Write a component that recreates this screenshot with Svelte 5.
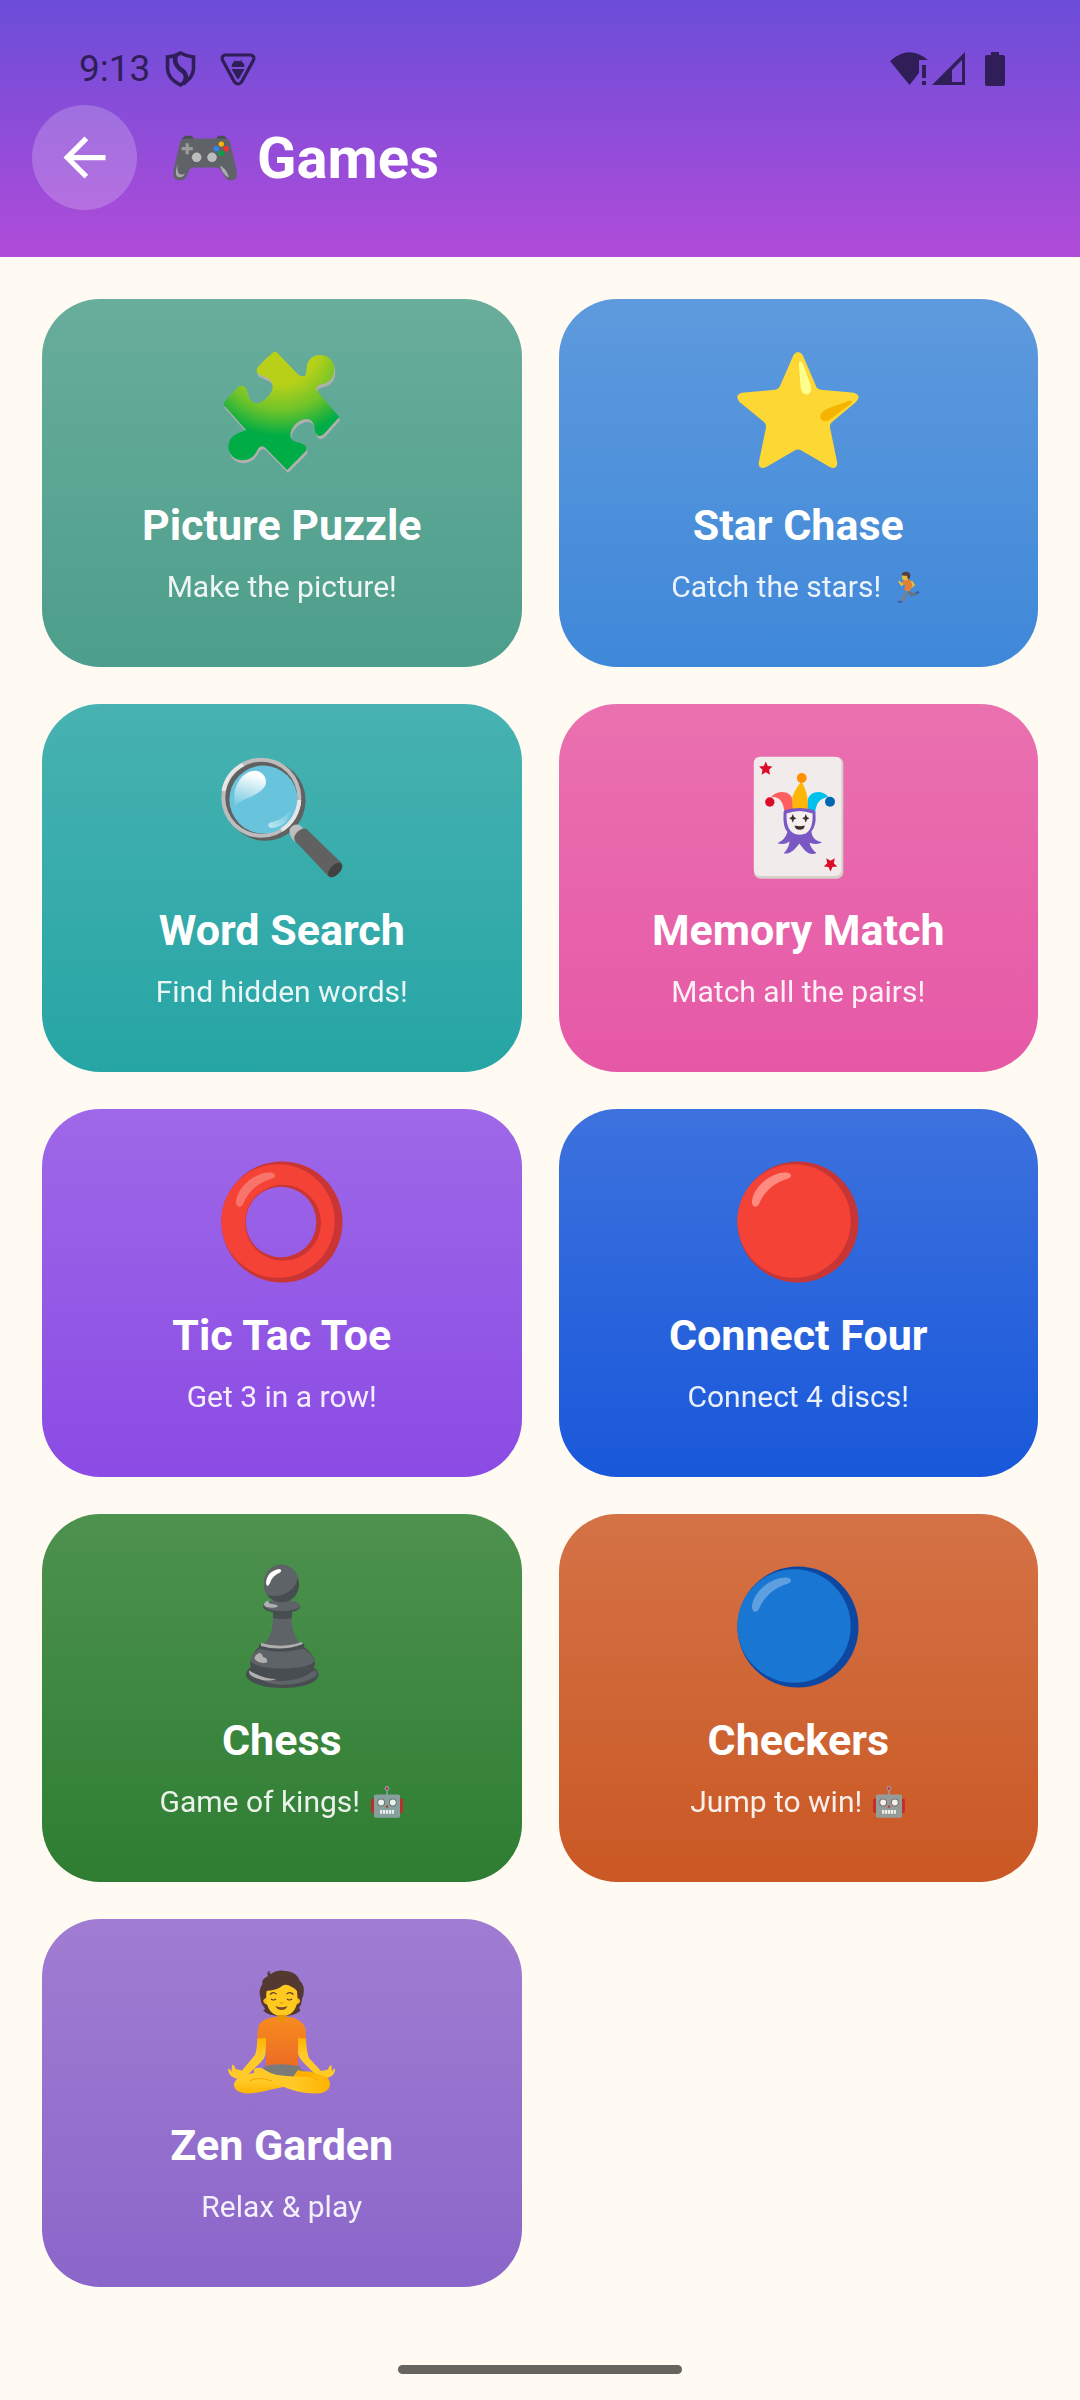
<script lang="ts">
  type Game = {
    id: string;
    title: string;
    tagline: string;
    badge?: 'runner' | 'robot';
    top: string;
    bottom: string;
  };

  const games: Game[] = [
    { id: 'puzzle', title: 'Picture Puzzle', tagline: 'Make the picture!', top: '#69ad9b', bottom: '#4d9e8c' },
    { id: 'star', title: 'Star Chase', tagline: 'Catch the stars!', badge: 'runner', top: '#5e9add', bottom: '#3f88d9' },
    { id: 'search', title: 'Word Search', tagline: 'Find hidden words!', top: '#47b2b1', bottom: '#26a5a5' },
    { id: 'memory', title: 'Memory Match', tagline: 'Match all the pairs!', top: '#ea71b0', bottom: '#e658a6' },
    { id: 'ring', title: 'Tic Tac Toe', tagline: 'Get 3 in a row!', top: '#9e68e8', bottom: '#8b4be4' },
    { id: 'red', title: 'Connect Four', tagline: 'Connect 4 discs!', top: '#3d72de', bottom: '#1958da' },
    { id: 'chess', title: 'Chess', tagline: 'Game of kings!', badge: 'robot', top: '#4d924f', bottom: '#2e7d32' },
    { id: 'blue', title: 'Checkers', tagline: 'Jump to win!', badge: 'robot', top: '#d47246', bottom: '#ca5824' },
    { id: 'zen', title: 'Zen Garden', tagline: 'Relax & play', top: '#a07dd2', bottom: '#8b66ca' }
  ];
</script>

{#snippet disc(base: string, shade: string, shine: string)}
  <circle cx="64" cy="64" r="60.5" fill={shade} />
  <circle cx="60" cy="63" r="56.7" fill={base} />
  <path d="M52 14.6C38 14 20 28 18 43c-.6 6 4.600 7.600 7 3C30 34 40 24.500 53 21c6-1.600 5-6.200-1-6.400z" fill={shine} />
{/snippet}

{#snippet gameIcon(id: string)}
  <svg class="game-icon" viewBox="0 0 128 128" aria-hidden="true">
    {#if id === 'puzzle'}
      <defs>
        <radialGradient id="piece-fill" gradientUnits="userSpaceOnUse" cx="62" cy="-2" r="90">
          <stop offset=".42" stop-color="#b8d118" />
          <stop offset=".72" stop-color="#6fc32a" />
          <stop offset="1" stop-color="#00ac46" />
        </radialGradient>
        <path
          id="piece"
          d="M55 4.500Q57 2.500 59 4.500L80 26.500Q83 29 86.500 28Q88.500 27 88.600 20C89.500 3 114 3 116.200 19C117 29 112 35 104 36.200Q96 38 99.500 43.500L121.300 69L106 86Q100 91 97.200 84C96.500 76 95 71.500 88 71C80 71.500 72 80 72.400 88C74 97 84 92 88 99Q89 101.500 87.500 103.500L69 122L48 100.500Q43 95.500 39.500 102Q35 111 27 112C16 113.500 8 104 11 95C13 86 22 85 28 82L5.300 56.500Q6 53 20 39Q25.500 35.500 28.700 41.500C30 50 34 56 40 55.200C47 53 55 45 54.700 38C54 28 42 29 39 24.500Q38 22 40 19Q46 12 55 4.500Z"
        />
      </defs>
      <use href="#piece" x="1" y="3" fill="#b0b0ae" />
      <use href="#piece" fill="url(#piece-fill)" />
    {:else if id === 'star'}
      <path d="M59.500 7Q64 1 68.700 7L82 38Q83 41.400 87 41.700L120 44.800Q128 48 122 54L97.500 74.500Q95.500 76.500 96 79.500L103.300 115Q103 122 95.800 119L66.500 102Q64 100.800 61.500 102L32.300 119Q24.500 122 24.700 115L32 79.500Q32.300 76.500 30.500 74.500L5.500 54Q0 47 8 44.800L41 41.700Q44.500 41.400 46 38Z" fill="#fdd835" />
      <path d="M65 17Q65 10 69 16L76.600 37C78 43 76 46.500 72.500 46.500C69 46.500 67 43 66.500 38Z" fill="#ffff8d" />
      <path d="M116 52.600C119.500 52.500 117.500 55.500 116 56.500L96 71.500C91 75 86 73 86.300 68C87 63 93 61 99 58.500Z" fill="#f4b400" />
    {:else if id === 'search'}
      <defs>
        <linearGradient id="lens-shine" x1=".55" y1="0" x2=".3" y2="1">
          <stop offset=".08" stop-color="#fff" />
          <stop offset="1" stop-color="#fff" stop-opacity=".1" />
        </linearGradient>
        <linearGradient id="lens-glint" x1="0" y1="1" x2="1" y2="0">
          <stop offset="0" stop-color="#c0e9f2" />
          <stop offset="1" stop-color="#68c4dd" />
        </linearGradient>
      </defs>
      <circle cx="47.300" cy="47.500" r="40.300" fill="#616161" />
      <circle cx="43.300" cy="44.700" r="40" fill="#bdbdbd" />
      <circle cx="43.300" cy="44.700" r="36" fill="#616161" />
      <circle cx="45.400" cy="46.600" r="34" fill="#68c4dd" />
      <path d="M5.500 38A38 38 0 0 1 25 11.500M81.300 47A38 38 0 0 1 63.500 77" fill="none" stroke="#e6e6e6" stroke-width="4" />
      <path d="M17 54C13 34 24 18 37 17.700C46 18 51 28 46 34.500C38 45 22 45 17 54Z" fill="url(#lens-shine)" />
      <path d="M73 56C65 67 58 68 52 69.500C49 71 50 75 54 75C66 74 72 66 73 56Z" fill="url(#lens-glint)" />
      <path d="M71.500 76Q77 69 83 73L88 80L77 89Q71 84 71.500 76Z" fill="#bdbdbd" />
      <path d="M76.300 84Q79 77 86 75.600Q88 75.600 89 76.600L123.500 110L110.500 123.500L77 88Q76 86 76.300 84Z" fill="#616161" />
      <ellipse cx="117.200" cy="117" rx="9" ry="4.800" transform="rotate(-45 117.200 117)" fill="#424242" />
    {:else if id === 'memory'}
      <rect x="20" y="4" width="89.300" height="121.700" rx="6.500" fill="#d8cfca" />
      <rect x="19.800" y="3.700" width="87.500" height="119.300" rx="6" fill="#f1eceb" />
      <path id="card-star" d="M31.800 8.500l2 4.500 4.700.5-3.400 3.300.9 4.900-4.200-2.400-4.300 2.400 1-4.900-3.500-3.300 4.800-.5z" fill="#dc0d28" />
      <use href="#card-star" transform="rotate(180 64.150 63.500)" />
      <path d="M37 44C44 36 58 38 58.700 48L59 57L50.500 60C50 50 46 43 37 44Z" fill="#ff5f5f" />
      <path d="M94.500 44C88 36 75 38 73.500 48L73 57L81.200 60C82 49 87 45 94.500 44Z" fill="#00c1ee" />
      <path d="M67.400 28C63 34 57 43 58.300 49L58.800 58H73.300C74.500 48 74 40 67.400 28Z" fill="#ffb60a" />
      <circle cx="67.800" cy="25" r="4.900" fill="#ff9100" />
      <circle cx="35.800" cy="49" r="4.700" fill="#dc0d28" />
      <circle cx="96" cy="48.700" r="5" fill="#0067b2" />
      <path d="M49.600 60Q49 57 53 56.500Q65 53.500 78.500 56.500Q82 57.500 81.500 61Q82.500 73 77.400 78.500C78 84 81 88 88 89.200Q84 92.500 75.500 89.800Q77 96 82.500 100Q76 103 70.500 97L65.300 90.500C61 96 57 101.500 49.500 100.500Q55 95 55.500 88.500Q50 92.500 43.300 90.300Q51 87 53.400 79Q48.500 74 49.600 60Z" fill="#7a58c3" />
      <path d="M52.600 60.500Q65 55.500 78.600 60.500C79 73 76 81.700 65.800 81.700C55 81.700 52 72 52.600 60.500Z" fill="#f4efee" />
      <path d="M58.800 61l1.200 3 2.500 1.200-2.500 1.300-1.200 3.200-1.200-3.200-2.500-1.300 2.500-1.200zM71.800 61l1.200 3 2.500 1.200-2.500 1.300-1.200 3.200-1.200-3.200-2.500-1.300 2.500-1.200zM60.600 72.500Q65.800 74 70.800 72.500Q70.500 76.700 65.800 76.700Q61 76.700 60.600 72.500Z" fill="#432c2c" />
    {:else if id === 'ring'}
      <mask id="ring-hole">
        <rect width="128" height="128" fill="#fff" />
        <circle cx="63" cy="64" r="35.300" fill="#000" />
      </mask>
      <g mask="url(#ring-hole)">
        {@render disc('#f44336', '#c93535', '#f8746a')}
        <circle cx="65" cy="64.800" r="38" fill="#c93535" />
      </g>
    {:else if id === 'red'}
      {@render disc('#f44336', '#c93535', '#ff8a80')}
    {:else if id === 'blue'}
      {@render disc('#1976d2', '#0d47a1', '#5e9fe0')}
    {:else if id === 'chess'}
      <path d="M28 112Q28 107 33 104H95Q100.500 107 100.500 112C99 121 82 125 64 125S29 120 28 112Z" fill="#474d50" />
      <path d="M31 108Q48 118 64 118Q82 118 97 107Q101 111 97 114Q82 122 64 122Q42 121 31 108Z" fill="#5e6367" />
      <path d="M31 107.500Q30 113 41 116Q50 119 58.500 116Q46 116 31 107.500Z" fill="#b0b0b0" />
      <path d="M41 84H86C93 89 97 95 97 101C95 110 80 114 64 114S34 111 32 101C33 94 36 88 41 84Z" fill="#474d50" />
      <path d="M41 86H86C92 90 96 94 96.500 98C94 103 80 105.500 64 105.500S37 103 32.500 98C33 94 36 89 41 86Z" fill="#5e6367" />
      <path d="M41 90Q44 90 45 94Q50 95 49 99.500Q42 101 38 97.500Q34 94 41 90Z" fill="#b0b0b0" />
      <path d="M41.300 81Q64 87 85.500 80Q87 82 85.500 85Q64 92 42 86Q40.500 84 41.300 81Z" fill="#474d50" />
      <path d="M55 52H73.500C73.500 67 77 74 82.500 81Q64 86 46 81C52 74 55.500 67 55 52Z" fill="#5e6367" />
      <path d="M43 80Q64 86 83.500 79L85 81Q64 89 43 83Z" fill="#b0b0b0" />
      <path d="M55 46H74V55Q64 57 55 55Z" fill="#474d50" />
      <ellipse cx="63.700" cy="43.500" rx="18.500" ry="6.800" fill="#474d50" />
      <ellipse cx="64" cy="42.500" rx="18" ry="5.600" fill="#5e6367" />
      <path d="M48 38.500Q43.500 42 49 44.300Q56 45.500 60 43.500Q59 41 53.500 41Q50 40 50.500 37.500Z" fill="#b0b0b0" />
      <circle cx="63.500" cy="21.700" r="17.600" fill="#474d50" />
      <path d="M46 22A17.500 17.500 0 0 1 80 14C78 27 65 36 49 32A17 17 0 0 1 46 22Z" fill="#5e6367" />
      <path d="M61 6Q65 7 62 9.500Q54 13 52 20Q49 26 48 20Q49 8 61 6Z" fill="#fff" />
    {:else}
      <defs>
        <linearGradient id="shirt" x1="0" y1="0" x2="0" y2="1">
          <stop offset="0" stop-color="#f78c1f" />
          <stop offset="1" stop-color="#ed6c23" />
        </linearGradient>
        <linearGradient id="skin" x1="0" y1="0" x2="0" y2="1">
          <stop offset="0" stop-color="#ffb300" />
          <stop offset=".4" stop-color="#ffca28" />
          <stop offset="1" stop-color="#ffca28" />
        </linearGradient>
        <linearGradient id="leg-left" x1="0" y1="0" x2="0" y2="1">
          <stop offset=".4" stop-color="#ffca28" />
          <stop offset="1" stop-color="#ffb300" />
        </linearGradient>
        <linearGradient id="leg-right" x1="0" y1="0" x2="1" y2="0">
          <stop offset=".5" stop-color="#ffca28" />
          <stop offset="1" stop-color="#ffb300" />
        </linearGradient>
      </defs>
      <path d="M50 8Q48 4 52 3Q51 6 53 6Q59 1 68 3Q79 4 82 13Q87 17 85.500 27L84 31Q84 36 81 40Q83 42 81.500 43.500Q76 48 64 48Q50 48 45 42.500Q48 42 46 39Q42.500 35 42.500 30Q40 22 44.500 16Q43 11 50 8Z" fill="#543930" />
      <ellipse cx="63.700" cy="33" rx="18.500" ry="6" fill="#f6b51c" />
      <path d="M48.500 23Q60 22 64 18Q68 15.500 73 18.500Q77 20 79 23Q82 47 64 48.500Q46 47 48.500 23Z" fill="#ffc91f" />
      <path d="M52 26.500Q55 23 58.500 26M68.500 26Q72 23 75.500 26.500M53 31Q55.500 33 58 31M69 31Q71.500 33 74 31" fill="none" stroke="#543930" stroke-width="1.200" />
      <path d="M61 34.500Q63.600 37 66 34.500Z" fill="#e59600" />
      <path d="M57.500 38Q63.500 40.500 69.500 38Q68 42 63.500 42T57.500 38Z" fill="#7d4a2d" />
      <path d="M39.300 70L48.200 70L47.500 86Q47 90 43 94L29.500 107Q26 112 20 111C12 109 10 105 10.200 101Q12 100 13.500 104L14 97Q16 96 17.500 101L24 102.500L37 87Q39 82 39.300 70Z" fill="url(#skin)" />
      <path d="M88 70L79.500 70L80 86Q81 90 85 94L98 107Q102 112 107 110.500C115 109 117 105 117 101Q115 100 114 104L113.500 97.500Q112 96.500 110 101.500L103 103L91 90Q88.500 84 88 70Z" fill="url(#skin)" />
      <path d="M47 98Q64 94 81 98Q83 102 87 104L80 112H48L43 103Z" fill="#7a7a78" />
      <path d="M63.700 48.500Q82 48 87.500 60L88 70.500L80 70V98Q64 95 48 97.500V70L39.300 70.500Q39 64 41 57Q46 48.500 63.700 48.500Z" fill="url(#shirt)" />
      <path d="M59.500 47H68V51.500Q64 54.500 59.500 51.500Z" fill="#e59600" />
      <path d="M75 109L80 102Q84 104 92 103.500L108 109Q112 112 112 117Q90 118 75 109Z" fill="#ffb300" />
      <path d="M16 116C18 108 29 106 36 105Q58 106 84 112L69 118.500C52 121 42 125.500 28 125.500Q15 124 16 116Z" fill="url(#leg-left)" />
      <path d="M36 101Q42 98 47 102Q53 106 59 107Q83 110 92 108Q105 106 111 112C114 120 109 125.500 98 125.500C83 125.500 67 121 54 113Q44 107 36 105Z" fill="url(#leg-right)" />
      <path d="M32 113Q39 108 54 113M80 107Q94 107 100 112" fill="none" stroke="#f5a800" stroke-width="1.200" />
    {/if}
  </svg>
{/snippet}

{#snippet badgeIcon(kind: string)}
  <svg class="badge-icon" viewBox="0 0 128 128" aria-hidden="true">
    {#if kind === 'robot'}
      <path d="M64 18V38" stroke="#90a4ae" stroke-width="6" />
      <circle cx="64" cy="13" r="9" fill="#90a4ae" />
      <circle cx="64" cy="13" r="4.500" fill="#d81b30" />
      <rect x="4" y="51" width="120" height="54" rx="6" fill="#c62828" />
      <rect x="15" y="36" width="98" height="87" rx="6" fill="#90a4a8" />
      <circle cx="42" cy="66" r="13" fill="#fff" stroke="#71767a" stroke-width="4" />
      <circle cx="86" cy="66" r="13" fill="#fff" stroke="#71767a" stroke-width="4" />
      <path d="M64 74l6 11H58z" fill="#c62828" />
      <path d="M38 101H90" stroke="#fff" stroke-width="14" stroke-dasharray="8 3" />
    {:else}
      <path d="M58 86L52 98L38 118" fill="none" stroke="#7d8083" stroke-width="12" />
      <path d="M66 80L78 94L94 88" fill="none" stroke="#6c7075" stroke-width="12" />
      <path d="M93 84L104 78L107 86L95 94ZM26 117L42 116L42 123H26Z" fill="#3559ac" />
      <path d="M50 46L40 56L30 42M76 42L86 56L74 66" fill="none" stroke="#fbc02d" stroke-width="8" />
      <path d="M48 38Q62 30 74 40L80 58L72 78Q60 84 50 74L54 58L44 52Z" fill="#f4801f" />
      <ellipse cx="54" cy="24" rx="13" ry="15" fill="#fbc02d" />
      <path d="M40 20Q42 6 58 7Q75 9 72 26Q70 34 64 36L60 22Q50 22 40 20Z" fill="#543930" />
    {/if}
  </svg>
{/snippet}

<div class="screen">
  <header>
    <div class="status-bar">
      <span class="clock">9:13</span>
      <div class="notices">
        <svg width="36" height="36" viewBox="0 0 36 36" fill="none" stroke="currentColor" aria-label="Shield">
          <path d="M17.500 2Q24 5.500 30.500 6V18Q30 28 17.500 34Q5 28 4.500 18V6Q12 5.500 17.500 2Z" stroke-width="3.600" />
          <path d="M13 4Q10 12 17 18Q27 24 20 33" stroke-width="4.500" />
        </svg>
        <svg width="36" height="36" viewBox="0 0 36 36" fill="currentColor" aria-label="Debugging">
          <path d="M5 4H31Q35 5 33.500 9L21.500 31Q18 35 14.500 31L2.500 9Q1 5 5 4Z" fill="none" stroke="currentColor" stroke-width="3.200" />
          <path d="M11.500 16Q12 11 15 10.500L13.500 8.500L16 10H20L22.500 8.500L21 10.500Q24 11 24.500 16ZM11.500 18H24.500L19 27.500Q18 29 17 27.500Z" />
        </svg>
      </div>
      <div class="signals">
        <svg width="38" height="36" viewBox="0 0 38 36" fill="currentColor" aria-label="Wi-Fi">
          <path d="M0 10Q19 -7 38 9H29V22L19.500 34ZM32 14H36V27H32ZM32 30H36V34H32Z" />
        </svg>
        <svg width="34" height="36" viewBox="0 0 34 36" fill="currentColor" aria-label="Mobile signal">
          <path fill-rule="evenodd" d="M0 34L33 1V34ZM30 9L20 19V31H30Z" />
        </svg>
        <svg class="battery" width="20" height="36" viewBox="0 0 20 36" fill="currentColor" aria-label="Battery">
          <path d="M6 1H14V4H18Q20 4 20 6V33Q20 35 18 35H2Q0 35 0 33V6Q0 4 2 4H6Z" />
        </svg>
      </div>
    </div>

    <div class="title-bar">
      <button class="back" aria-label="Back">
        <svg width="63" height="63" viewBox="0 0 24 24" fill="currentColor" aria-hidden="true">
          <path d="M20 11H7.830l5.590-5.590L12 4l-8 8 8 8 1.410-1.410L7.830 13H20z" />
        </svg>
      </button>
      <h1>
        <svg width="68" height="68" viewBox="0 0 128 128" aria-hidden="true">
          <path d="M20 31Q22 22 30 22H38Q42 23 43 31ZM85 31Q86 23 90 22H98Q104 23 107 31Z" fill="#484d51" />
          <path d="M17 34Q19 28 28 27.500H100Q109 28 111 34L121.500 79Q125 93 123.500 99Q121 106 113 106Q106 106 102 100L94 87Q91 82 86 82H42Q37 82 34 87L28 100Q24 106 16 106Q7 106 4.500 98Q4 91 6.500 79Z" fill="#5f6368" />
          <path d="M27.500 36h6v7.500H41v6h-7.500V57h-6v-7.500H20v-6h7.500z" fill="#9b9b9b" />
          <circle cx="48.300" cy="62.700" r="9" fill="#bdbdbd" />
          <circle cx="77.200" cy="62.700" r="9" fill="#bdbdbd" />
          <circle cx="94.700" cy="37.800" r="5" fill="#ffb300" />
          <circle cx="85.300" cy="46.500" r="5" fill="#2a86f3" />
          <circle cx="103.500" cy="46.500" r="5" fill="#f5322d" />
          <circle cx="94.300" cy="55" r="5" fill="#00a644" />
          <path d="M12 76Q5 97 14 100Q24 101 26 93Q18 98 14 92Q11 86 12 76ZM92 78Q98 96 107 100Q110 99 107 95Q104 84 92 78Z" fill="#a8aaab" />
        </svg>
        Games
      </h1>
    </div>
  </header>

  <main>
    {#each games as game (game.id)}
      <button class="card" style="--top: {game.top}; --bottom: {game.bottom}">
        {@render gameIcon(game.id)}
        <span class="title">{game.title}</span>
        <span class="tagline">
          {game.tagline}
          {#if game.badge}{@render badgeIcon(game.badge)}{/if}
        </span>
      </button>
    {/each}
  </main>

  <div class="home-bar"></div>
</div>

<style>
  :global(body) {
    margin: 0;
    background: #fffbf3;
  }

  .screen {
    min-height: 100vh;
    box-sizing: border-box;
    padding-bottom: 26px;
    display: flex;
    flex-direction: column;
    font-family: Roboto, 'Noto Sans', sans-serif;
    background: #fffbf3;
  }

  button {
    border: 0;
    font: inherit;
    color: #fff;
    cursor: pointer;
  }

  svg {
    display: block;
    flex: none;
  }

  header {
    padding-bottom: 47px;
    background: linear-gradient(#6b4dd8, #b04cd9);
  }

  .status-bar {
    display: flex;
    align-items: center;
    height: 73px;
    padding: 32px 75px 0 79px;
    color: #2f1e57;
  }

  .clock {
    font-size: 37px;
    line-height: 44px;
  }

  .notices {
    display: flex;
    gap: 21px;
    margin-left: 13px;
  }

  .signals {
    display: flex;
    gap: 4px;
    margin-left: auto;
  }

  .battery {
    margin-left: 15px;
  }

  .title-bar {
    display: flex;
    align-items: center;
    gap: 34px;
    padding: 0 32px;
  }

  .back {
    display: grid;
    place-items: center;
    width: 105px;
    height: 105px;
    padding: 0;
    border-radius: 50%;
    background: rgba(255, 255, 255, 0.2);
  }

  h1 {
    display: flex;
    align-items: center;
    gap: 18px;
    margin: 0;
    font-size: 58px;
    line-height: 68px;
    font-weight: 700;
    color: #fff;
  }

  main {
    display: grid;
    grid-template-columns: 1fr 1fr;
    gap: 37px;
    padding: 42px;
  }

  .card {
    display: flex;
    flex-direction: column;
    align-items: center;
    padding: 49px 20px 60px;
    border-radius: 58px;
    background: linear-gradient(var(--top), var(--bottom));
  }

  .game-icon {
    width: 128px;
    height: 128px;
  }

  .title {
    margin-top: 21px;
    font-size: 43px;
    line-height: 56px;
    font-weight: 700;
  }

  .tagline {
    display: flex;
    align-items: center;
    gap: 10px;
    margin-top: 14px;
    font-size: 30px;
    line-height: 40px;
    opacity: 0.9;
  }

  .badge-icon {
    width: 34px;
    height: 34px;
  }

  .home-bar {
    width: 284px;
    height: 9px;
    margin: auto auto 0;
    border-radius: 5px;
    background: #66645f;
  }
</style>
